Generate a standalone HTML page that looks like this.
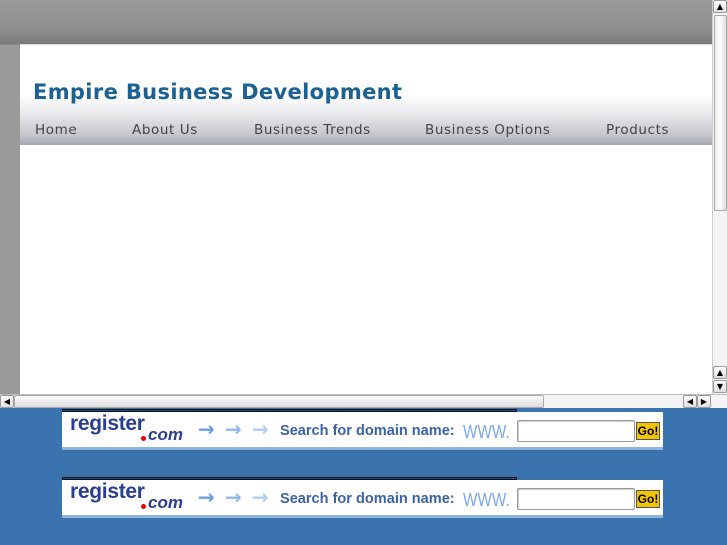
<!DOCTYPE html>
<html><head><meta charset="utf-8"><style>
*{margin:0;padding:0;box-sizing:border-box}
body{width:727px;height:545px;overflow:hidden;background:#3a73ad;position:relative;font-family:"DejaVu Sans","Liberation Sans",sans-serif}
#top{position:absolute;left:0;top:0;width:712px;height:394px;background:linear-gradient(#9a9a9a,#8e8e8e 30px,#7a7a7a 44px,#9a9a9a 45px);}
#frame{position:absolute;left:20px;top:44px;width:692px;height:350px;background:#fff;border-top:1px solid #ddd}
#hdr{position:absolute;left:0;top:50px;width:692px;height:50px;background:linear-gradient(#fff,#e6e7ea 20px,#c4c6cc 40px,#a8aab2 49px)}
h1{position:absolute;left:13px;top:35px;font-size:21px;font-weight:bold;color:#1b6191;letter-spacing:0.35px}
.nav{position:absolute;top:77px;font-size:13.5px;color:#444;letter-spacing:0.6px}
#vs{position:absolute;left:712px;top:0;width:15px;height:394px;background:#f4f4f4;border-left:1px solid #ccc}
#vs .t{position:absolute;left:1px;top:15px;width:13px;height:196px;background:linear-gradient(90deg,#eee,#fafafa,#ddd);border:1px solid #aaa;border-radius:2px}
.btn{position:absolute;width:14px;height:13px;background:linear-gradient(#fff,#ddd);border:1px solid #999;border-radius:2px;font-size:8px;line-height:11px;text-align:center;color:#000}
#hs{position:absolute;left:0;top:394px;width:727px;height:14px;background:#f4f4f4;border-top:1px solid #bbb}
#hs .t{position:absolute;left:14px;top:0;width:530px;height:13px;background:linear-gradient(#fafafa,#ddd);border:1px solid #aaa;border-radius:2px}
.ban{position:absolute;left:62px;width:601px;height:38px;background:#fff;border-bottom:3px solid #8fb4e0}
.line{position:absolute;left:62px;width:455px;height:3px;background:#1c4f86;border:1px solid #111}
.reg{position:absolute;left:8px;top:0px;font-family:"Liberation Sans",sans-serif;font-weight:bold;font-size:21px;color:#2a3f8f;letter-spacing:-0.3px}
.com{position:absolute;left:86px;top:13px;font-family:"Liberation Sans",sans-serif;font-style:italic;font-weight:bold;font-size:17px;color:#2a3f8f}
.dot{position:absolute;left:79px;top:24px;width:5px;height:5px;border-radius:50%;background:#e00}
.arr{position:absolute;top:5px;font-size:20px;font-weight:bold}
.sf{position:absolute;left:218px;top:10px;font-family:"Liberation Sans",sans-serif;font-weight:bold;font-size:15px;color:#3a62a8;transform:scaleX(.97);transform-origin:left}
.www{position:absolute;left:401px;top:10px;font-family:"Liberation Sans",sans-serif;font-size:18px;color:#7aa8e6;transform:scaleX(.85);transform-origin:left}
.in{position:absolute;left:455px;top:8px;width:118px;height:22px;border:1px solid #999;border-radius:2px;background:#fff;box-shadow:inset 1px 1px 1px #ccc}
.go{position:absolute;left:574px;top:10px;width:24px;height:18px;background:#f5c400;border:1px solid #555;font-family:"Liberation Sans",sans-serif;font-weight:bold;font-size:12px;line-height:16px;text-align:center;color:#000}
</style></head><body>
<div id="top"></div>
<div id="frame">
<div id="hdr"></div>
<h1>Empire Business Development</h1>
<div class="nav" style="left:15px">Home</div>
<div class="nav" style="left:112px">About Us</div>
<div class="nav" style="left:234px">Business Trends</div>
<div class="nav" style="left:405px">Business Options</div>
<div class="nav" style="left:586px">Products</div>
</div>
<div id="vs"><div class="btn" style="left:0;top:0">▲</div><div class="t"></div><div class="btn" style="left:0;top:366px">▲</div><div class="btn" style="left:0;top:380px">▼</div></div>
<div id="hs"><div class="btn" style="left:0;top:0">◀</div><div class="t"></div><div class="btn" style="left:683px;top:0">◀</div><div class="btn" style="left:697px;top:0">▶</div></div>

<div class="line" style="top:409px"></div>
<div class="ban" style="top:412px">
<div class="reg">register</div><div class="dot"></div><div class="com">com</div>
<div class="arr" style="left:136px;color:#6a9fe0">→</div><div class="arr" style="left:163px;color:#8fb8ec">→</div><div class="arr" style="left:190px;color:#b0cdf2">→</div>
<div class="sf">Search for domain name:</div><div class="www">WWW.</div>
<div class="in"></div><div class="go">Go!</div>
</div>

<div class="line" style="top:477px"></div>
<div class="ban" style="top:480px">
<div class="reg">register</div><div class="dot"></div><div class="com">com</div>
<div class="arr" style="left:136px;color:#6a9fe0">→</div><div class="arr" style="left:163px;color:#8fb8ec">→</div><div class="arr" style="left:190px;color:#b0cdf2">→</div>
<div class="sf">Search for domain name:</div><div class="www">WWW.</div>
<div class="in"></div><div class="go">Go!</div>
</div>
</body></html>
